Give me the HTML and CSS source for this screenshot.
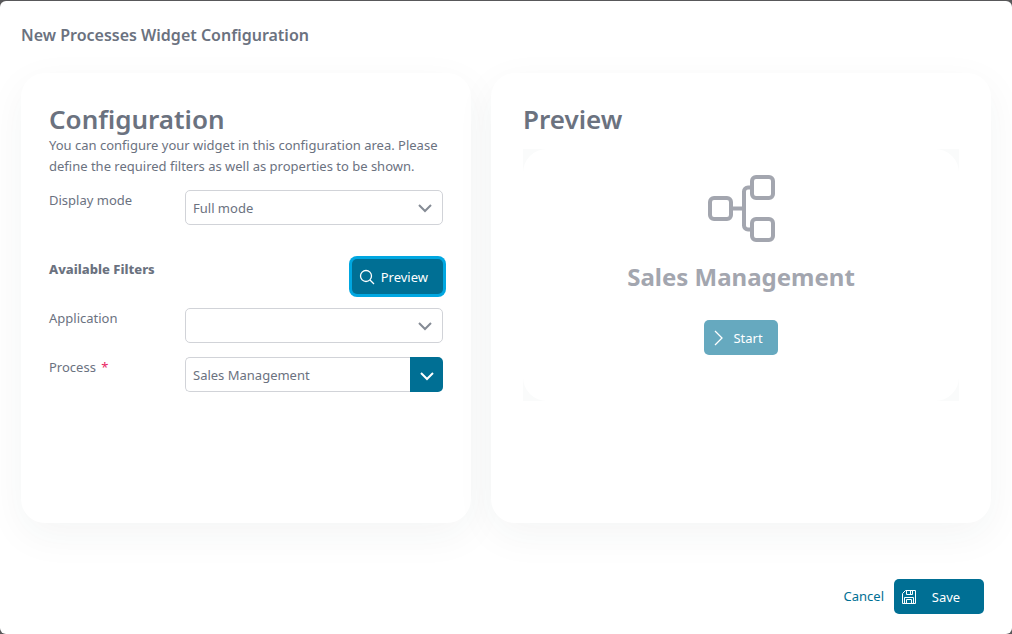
FILE: index.html
```html
<!DOCTYPE html>
<html lang="en">
<head>
    <meta charset="UTF-8">
    <title>New Processes Widget Configuration</title>
    <link rel="stylesheet" href="styles.css">
</head>
<body>
    <form class="dialog">
        <h1 class="dialog-title">New Processes Widget Configuration</h1>

        <div class="panels">
            <section class="panel config-panel">
                <h2>Configuration</h2>
                <p class="description">You can configure your widget in this configuration area. Please define the required filters as well as properties to be shown.</p>

                <div class="field">
                    <label for="displayMode">Display mode</label>
                    <div class="select-wrap">
                        <select id="displayMode">
                            <option>Full mode</option>
                        </select>
                        <svg class="chevron" viewBox="0 0 14 14"><path d="M1 4l6 6 6-6"/></svg>
                    </div>
                </div>

                <div class="filters-header">
                    <h3>Available Filters</h3>
                    <button type="button" class="btn btn-preview">
                        <svg class="icon" viewBox="0 0 16 16"><circle cx="7" cy="7" r="5.5"/><path d="M11 11l4 4"/></svg>
                        Preview
                    </button>
                </div>

                <div class="field">
                    <label for="application">Application</label>
                    <div class="select-wrap">
                        <select id="application">
                            <option></option>
                        </select>
                        <svg class="chevron" viewBox="0 0 14 14"><path d="M1 4l6 6 6-6"/></svg>
                    </div>
                </div>

                <div class="field">
                    <label for="process">Process <span class="required">*</span></label>
                    <div class="autocomplete">
                        <input type="text" id="process" value="Sales Management">
                        <button type="button" class="dropdown-btn" aria-label="Show processes">
                            <svg class="chevron" viewBox="0 0 14 14"><path d="M1 5l6 6 6-6"/></svg>
                        </button>
                    </div>
                </div>
            </section>

            <section class="panel preview-panel">
                <h2>Preview</h2>
                <div class="preview-frame">
                    <div class="widget">
                        <svg class="process-icon" viewBox="0 0 68 68">
                            <rect x="3" y="23" width="21" height="21" rx="4"/>
                            <rect x="45" y="2" width="21" height="21" rx="4"/>
                            <rect x="45" y="44" width="21" height="21" rx="4"/>
                            <path d="M24 33.5h13M45 12.5h-4a4 4 0 0 0-4 4v34a4 4 0 0 0 4 4h4"/>
                        </svg>
                        <h4>Sales Management</h4>
                        <button type="button" class="btn btn-start" disabled>
                            <svg class="icon" viewBox="0 0 16 16"><path d="M4 1l7 7-7 7"/></svg>
                            Start
                        </button>
                    </div>
                </div>
            </section>
        </div>

        <div class="dialog-footer">
            <a href="#" class="cancel-link">Cancel</a>
            <button type="submit" class="btn btn-save">
                <svg class="icon save-icon" viewBox="0 0 16 16"><path d="M4.500 1.500h10v13h-13v-10zM5.500 1.500v4h6v-4M9.500 2v3M3.500 14.500v-6h9v6M5.500 10.500h5v4h-5z"/></svg>
                <span>Save</span>
            </button>
        </div>
    </form>
</body>
</html>
```
FILE: styles.css
```css
* {
    box-sizing: border-box;
}

body {
    margin: 0;
    padding-top: 1px;
    background: #58585a;
    color: #6b727f;
    font-family: "Segoe UI", "Noto Sans", sans-serif;
    font-size: 13px;
    line-height: 21px;
}

h1, h2, h3, h4, p {
    margin: 0;
}

button, input, select {
    font: inherit;
    color: inherit;
}

.dialog {
    display: flex;
    flex-direction: column;
    min-height: calc(100vh - 1px);
    padding: 22px 21px 20px;
    background: #fff;
    border-radius: 6px;
}

.dialog-title {
    margin-bottom: 26px;
    font-size: 16px;
    line-height: 24px;
    font-weight: 600;
}

.panels {
    display: grid;
    grid-template-columns: 9fr 10fr;
    gap: 20px;
}

.panel {
    min-height: 450px;
    padding: 30px 28px;
    background: #fff;
    border-radius: 24px;
    box-shadow: 0 12px 40px rgba(40, 60, 55, 0.05);
}

.preview-panel {
    padding: 30px 32px;
}

h2 {
    font-size: 26px;
    line-height: 32px;
    font-weight: 600;
}

.description {
    margin-bottom: 13px;
}

.field {
    display: grid;
    grid-template-columns: 136px 1fr;
    align-items: start;
    margin-bottom: 14px;
}

.required {
    margin-left: 2px;
    color: #e91e63;
}

.select-wrap {
    position: relative;
}

select,
.autocomplete input {
    display: block;
    width: 100%;
    height: 35px;
    padding: 1px 7px 0;
    border: 1px solid #d1d3d8;
    border-radius: 5px;
    background: #fff;
    appearance: none;
}

.chevron {
    width: 14px;
    height: 14px;
    fill: none;
    stroke: #858b95;
    stroke-width: 2;
}

.select-wrap .chevron {
    position: absolute;
    top: 11px;
    right: 11px;
    pointer-events: none;
}

.autocomplete {
    display: flex;
}

.autocomplete input {
    flex: 1;
    min-width: 0;
    border-right: 0;
    border-radius: 5px 0 0 5px;
}

.dropdown-btn {
    display: flex;
    align-items: center;
    justify-content: center;
    width: 33px;
    padding: 0;
    border: 0;
    border-radius: 0 5px 5px 0;
    background: #006f94;
}

.dropdown-btn .chevron {
    stroke: #fff;
}

.filters-header {
    display: flex;
    justify-content: space-between;
    align-items: flex-start;
    margin: 34px 0 14px;
}

h3 {
    font-size: 13px;
    line-height: 21px;
    font-weight: 800;
}

.btn {
    display: flex;
    align-items: center;
    height: 35px;
    padding: 1px 15px 0 7px;
    border: 0;
    border-radius: 5px;
    background: #006f94;
    color: #fff;
}

.icon {
    width: 16px;
    height: 16px;
    fill: none;
    stroke: currentColor;
    stroke-width: 1.3;
}

.save-icon {
    stroke-width: 1;
}

.btn-preview {
    gap: 6px;
    box-shadow: 0 0 0 3px #00a7e1;
}

.preview-frame {
    margin-top: 14px;
    background: #fafbfb;
}

.widget {
    display: flex;
    flex-direction: column;
    align-items: center;
    height: 252px;
    padding-top: 26px;
    background: #fff;
    border-radius: 24px;
}

.process-icon {
    width: 68px;
    height: 68px;
    fill: none;
    stroke: #a3a6af;
    stroke-width: 4;
}

h4 {
    margin: 16px 0 26px;
    color: #a3a6af;
    font-size: 24px;
    line-height: 35px;
    font-weight: 700;
}

.btn-start {
    gap: 6px;
    background: #66a9bf;
}

.dialog-footer {
    display: flex;
    justify-content: flex-end;
    align-items: center;
    gap: 10px;
    margin-top: auto;
    padding-right: 7px;
}

.cancel-link {
    color: #006f94;
    text-decoration: none;
}

.btn-save {
    width: 90px;
}

.btn-save span {
    flex: 1;
    padding-left: 6px;
}
```
